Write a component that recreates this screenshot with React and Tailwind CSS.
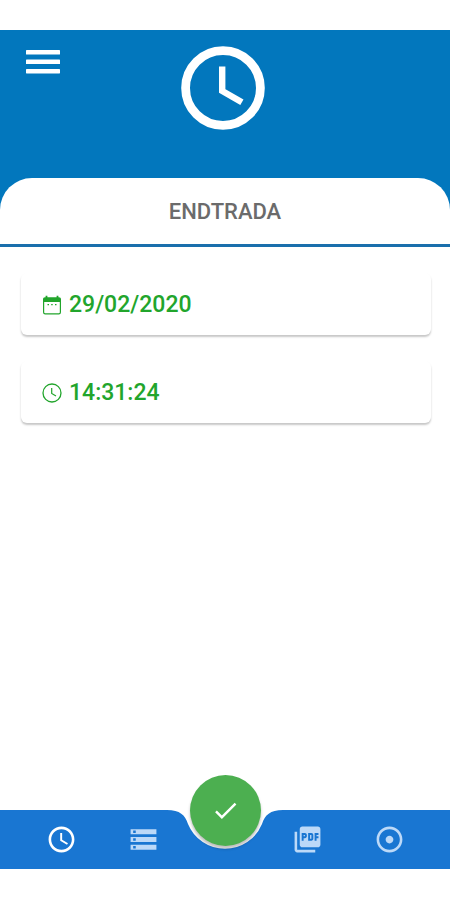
import React from 'react';
import { MdAccessTime, MdAdjust, MdCheck, MdPictureAsPdf, MdStorage } from 'react-icons/md';

const leftTabs = [
  { id: 'clock', icon: MdAccessTime, label: 'Clock', active: true },
  { id: 'records', icon: MdStorage, label: 'Records' },
];

const rightTabs = [
  { id: 'pdf', icon: MdPictureAsPdf, label: 'PDF' },
  { id: 'location', icon: MdAdjust, label: 'Location' },
];

function MenuIcon() {
  return (
    <svg width="34" height="24" viewBox="0 0 34 24" fill="currentColor" aria-hidden="true">
      <rect width="34" height="4.6" rx="0.6" />
      <rect y="9.6" width="34" height="4.4" rx="0.6" />
      <rect y="19" width="34" height="4.4" rx="0.6" />
    </svg>
  );
}

function ClockIcon() {
  return (
    <svg width="84" height="84" viewBox="0 0 84 84" fill="none" stroke="currentColor" aria-hidden="true">
      <circle cx="42" cy="42" r="37.4" strokeWidth="8.8" />
      <path d="M41.2 20.5v24.500l19.700 11.300" strokeWidth="6.4" />
    </svg>
  );
}

function CalendarIcon() {
  return (
    <svg width="20" height="20" viewBox="0 0 20 20" fill="none" aria-hidden="true">
      <rect x="1.600" y="3.600" width="16.800" height="15.200" rx="1.600" stroke="currentColor" strokeWidth="1.200" />
      <path d="M1 7V4.200a2 2 0 0 1 2-2h14a2 2 0 0 1 2 2V7z" fill="currentColor" />
      <path d="M4.500 0.800v3M15.500 0.800v3" stroke="currentColor" strokeWidth="1.800" />
      <path d="M5.500 9.600h1.500M9.200 9.600h1.500M13 9.600h1.500" stroke="currentColor" strokeWidth="1.400" />
    </svg>
  );
}

function ThinClockIcon() {
  return (
    <svg width="20" height="20" viewBox="0 0 20 20" fill="none" stroke="currentColor" aria-hidden="true">
      <circle cx="10" cy="10" r="9" strokeWidth="1.3" />
      <path d="M9.700 5v5.500l4.300 2.600" strokeWidth="1.200" />
    </svg>
  );
}

function InfoCard({ icon: Icon, children }) {
  return (
    <div className="flex h-[62px] items-center gap-[7px] rounded-md bg-white px-[21px] pt-px text-[#22a52c] shadow-[0_2px_2px_rgba(0,0,0,0.22)]">
      <Icon />
      <span className="text-[23px] leading-7 font-medium">{children}</span>
    </div>
  );
}

function TabButton({ item }) {
  return (
    <button
      type="button"
      aria-label={item.label}
      className={`flex items-center justify-center ${item.active ? 'text-white' : 'text-[#bcd9f8]'}`}
    >
      <item.icon size={31} />
    </button>
  );
}

export default function App() {
  return (
    <div className="flex min-h-screen flex-col bg-white pt-[30px] pb-[31px] font-['Roboto',sans-serif]">
      <header className="bg-[#0277bd]">
        <div className="grid h-[148px] grid-cols-[1fr_auto_1fr] items-start pt-4 pr-[30px] pl-[26px]">
          <button type="button" aria-label="Menu" className="mt-1 justify-self-start text-white">
            <MenuIcon />
          </button>
          <div className="text-white">
            <ClockIcon />
          </div>
        </div>
        <div className="flex h-[66px] items-center justify-center rounded-t-[32px] bg-white pt-0.5">
          <h1 className="text-[22px] leading-7 font-medium text-[#6b6b6b]">ENDTRADA</h1>
        </div>
        <div className="h-[3px] bg-[#1a6fac]" />
      </header>

      <main className="flex flex-1 flex-col gap-[26px] pt-[26px] pr-[19px] pl-[21px]">
        <InfoCard icon={CalendarIcon}>29/02/2020</InfoCard>
        <InfoCard icon={ThinClockIcon}>14:31:24</InfoCard>
      </main>

      <nav className="relative grid h-[59px] grid-cols-5 bg-[#1976d2] px-5">
        {/* Cut-out under the confirm button */}
        <svg
          className="absolute top-0 left-1/2 -translate-x-1/2"
          width="116"
          height="44"
          viewBox="0 0 116 44"
          aria-hidden="true"
        >
          <path d="M0 0C13 0 18 5 21 14A40 40 0 0 0 95 14C98 5 103 0 116 0z" fill="#fff" />
        </svg>
        {leftTabs.map((item) => (
          <TabButton key={item.id} item={item} />
        ))}
        <button
          type="button"
          aria-label="Confirm"
          className="relative -mt-[35px] flex h-[71px] w-[71px] items-center justify-center justify-self-center rounded-full bg-[#4caf50] text-white shadow-[0_3px_3px_rgba(0,0,0,0.25)]"
        >
          <MdCheck size={29} />
        </button>
        {rightTabs.map((item) => (
          <TabButton key={item.id} item={item} />
        ))}
      </nav>
    </div>
  );
}
